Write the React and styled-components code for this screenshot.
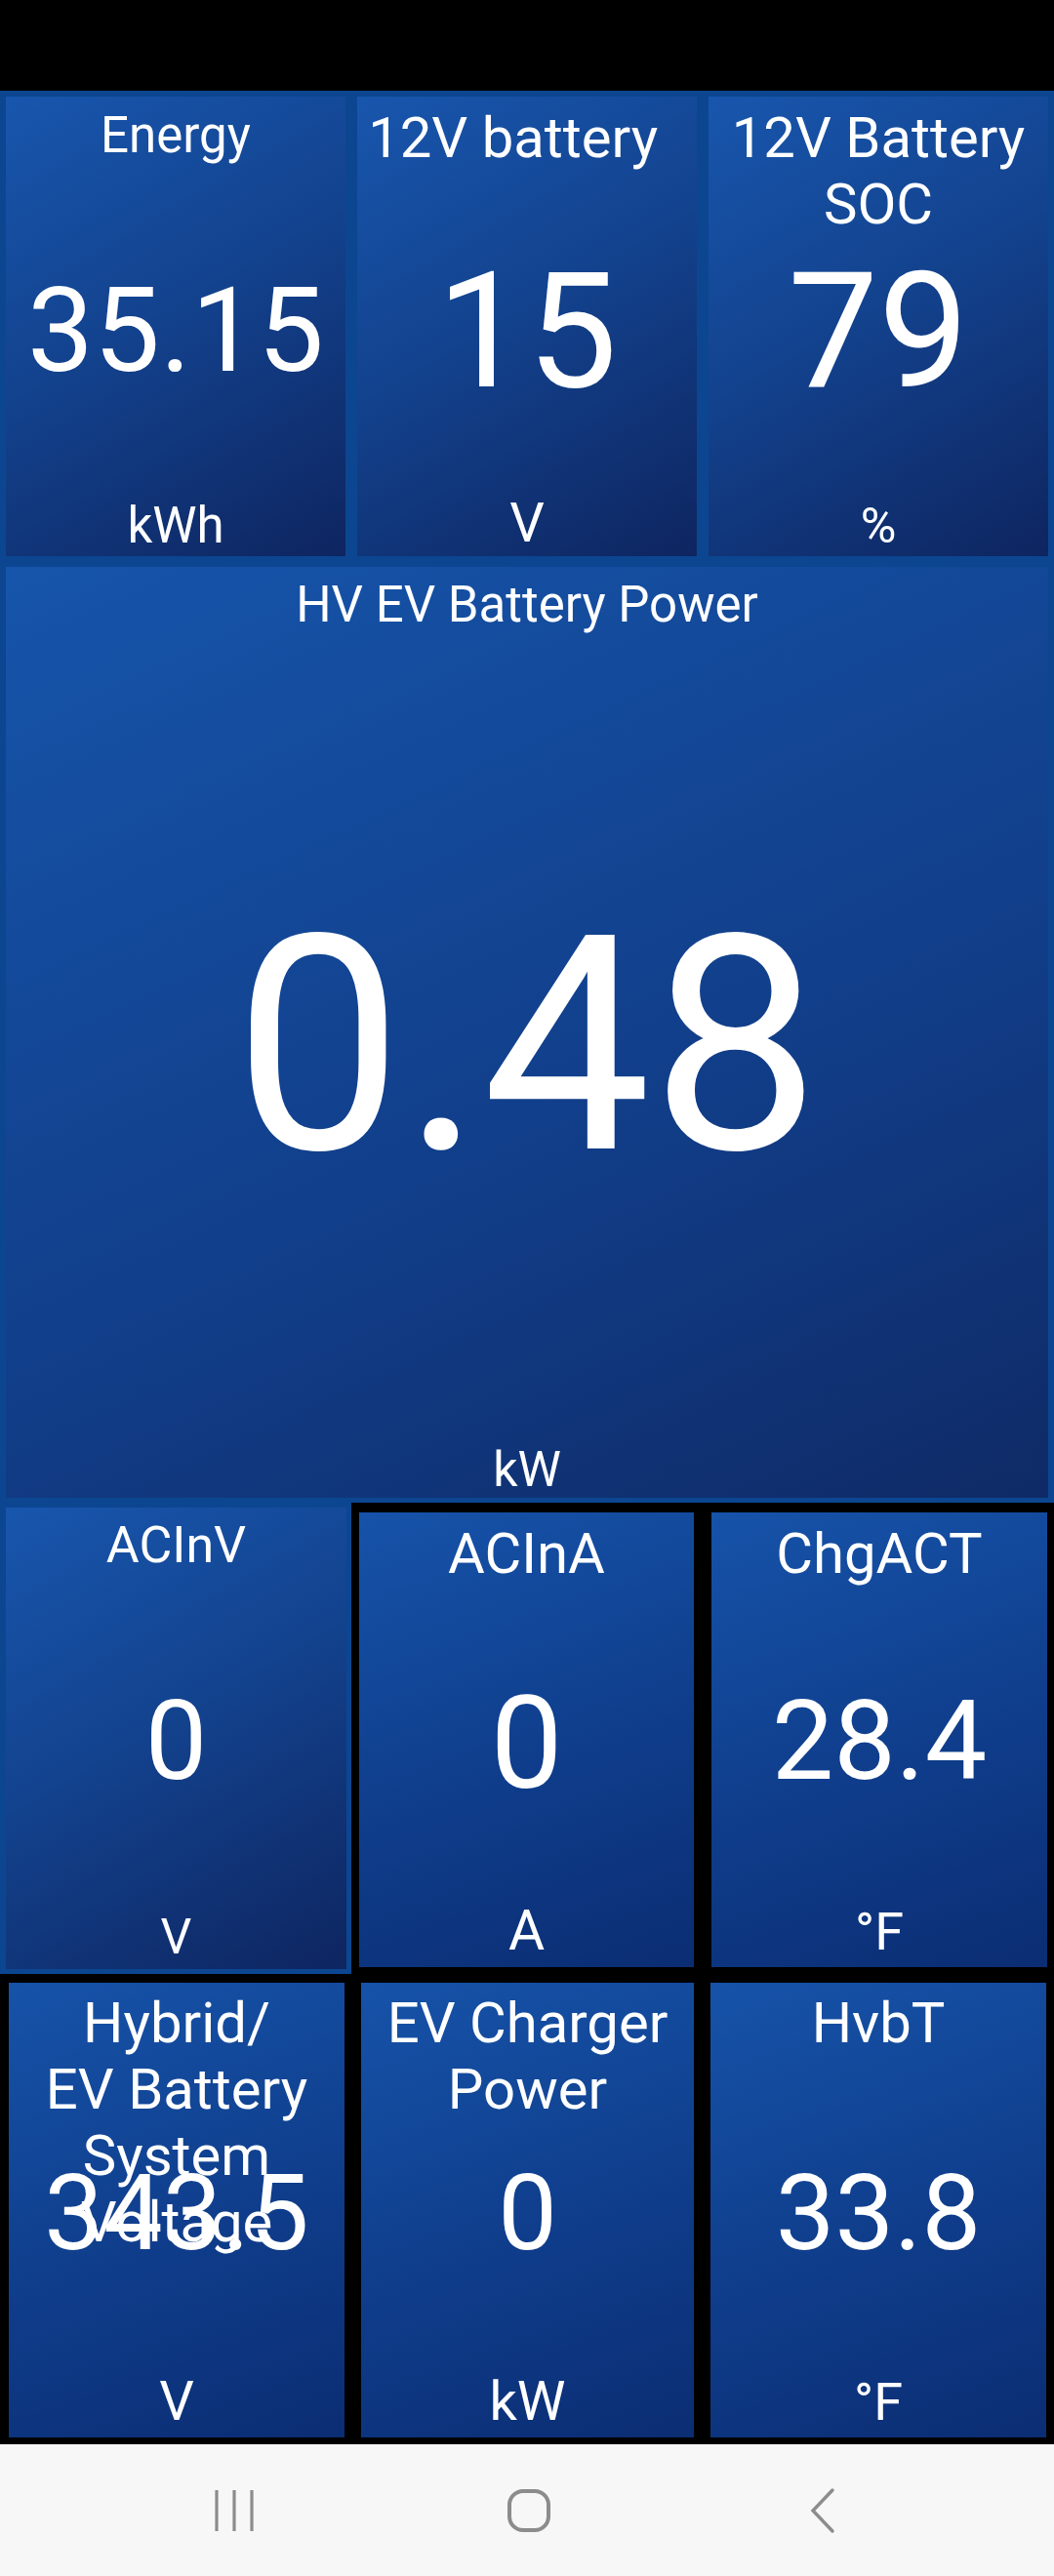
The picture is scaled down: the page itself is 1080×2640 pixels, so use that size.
import React from 'react';
import styled, { createGlobalStyle } from 'styled-components';

const GlobalStyle = createGlobalStyle`
  html, body {
    margin: 0;
    padding: 0;
    background: #000;
  }
  body {
    font-family: Roboto, "Noto Sans", "Liberation Sans", sans-serif;
  }
`;

const gradients = {
  dark: 'linear-gradient(150deg, #1856ad 0%, #13438f 45%, #0e2560 100%)',
  light: 'linear-gradient(160deg, #1653a9 0%, #0f3d8b 55%, #0b2d73 100%)',
  big: 'linear-gradient(155deg, #1655ab 0%, #113d88 60%, #0f2a66 100%)'
};

const Screen = styled.div`
  width: 1080px;
  height: 2640px;
  display: flex;
  flex-direction: column;
  background: #000;
  overflow: hidden;
`;

const StatusBar = styled.div`
  height: 93px;
  flex: none;
  background: #000;
`;

const SelectedFrame = styled.div`
  background: #0c4691;
  padding: 6px 6px 5px 6px;
  display: flex;
  flex-direction: column;
  gap: 11px;
`;

const TopRow = styled.div`
  display: grid;
  grid-template-columns: repeat(3, 348px);
  column-gap: 12px;
`;

const MidRow = styled.div`
  display: flex;
  align-items: flex-start;
`;

const CellFrame = styled.div`
  width: 360px;
  box-sizing: border-box;
  background: #0c4691;
  padding: 5px 5px 5px 6px;
`;

const BottomRow = styled.div`
  display: grid;
  grid-template-columns: 344px 341px 344px;
  column-gap: 17px;
  padding: 9px 7px 0 9px;
`;

const Tile = styled.div`
  display: grid;
  grid-template: 1fr / 1fr;
  box-sizing: border-box;
  height: ${p => p.$h}px;
  width: ${p => (p.$w ? `${p.$w}px` : 'auto')};
  margin-top: ${p => p.$mt || 0}px;
  margin-left: ${p => p.$ml || 0}px;
  background: ${p => gradients[p.$tone || 'light']};
  color: #fff;
  text-align: center;
  overflow: hidden;

  & > * {
    grid-area: 1 / 1;
  }
`;

const Title = styled.div`
  align-self: start;
  padding: ${p => p.$pt || 9}px 2px 0;
  font-size: ${p => p.$size}px;
  line-height: 1.17;
  font-weight: 400;
  white-space: pre-wrap;
`;

const Value = styled.div`
  align-self: center;
  margin-top: ${p => p.$offset || 0}px;
  font-size: ${p => p.$size}px;
  line-height: 1;
  font-weight: 400;
`;

const Unit = styled.div`
  align-self: end;
  padding-bottom: ${p => p.$pb || 7}px;
  font-size: ${p => p.$size}px;
  line-height: 1;
`;

const NavBar = styled.div`
  margin-top: auto;
  height: 135px;
  flex: none;
  background: #f7f7f7;
  display: flex;
  align-items: center;
  padding-left: 181px;
  gap: 181px;
`;

const NavButton = styled.div`
  width: 120px;
  height: 60px;
  display: flex;
  align-items: center;
  justify-content: center;
  color: #8c8c8c;
`;

const Gauge = ({ title, value, unit, tone, h, w, mt, ml, ts, vs, us, tp, vo, ub }) => (
  <Tile $tone={tone} $h={h} $w={w} $mt={mt} $ml={ml}>
    <Title $size={ts} $pt={tp}>{title}</Title>
    <Value $size={vs} $offset={vo}>{value}</Value>
    <Unit $size={us} $pb={ub}>{unit}</Unit>
  </Tile>
);

const RecentsIcon = () => (
  <svg width="44" height="46" viewBox="0 0 44 46" fill="none" stroke="currentColor" strokeWidth="3.2">
    <line x1="3" y1="2" x2="3" y2="44" />
    <line x1="21" y1="2" x2="21" y2="44" />
    <line x1="39" y1="2" x2="39" y2="44" />
  </svg>
);

const HomeIcon = () => (
  <svg width="46" height="46" viewBox="0 0 46 46" fill="none" stroke="currentColor" strokeWidth="4">
    <rect x="3" y="3" width="40" height="40" rx="14" />
  </svg>
);

const BackIcon = () => (
  <svg width="28" height="48" viewBox="0 0 28 48" fill="none" stroke="currentColor" strokeWidth="3.4" strokeLinecap="round">
    <polyline points="24,3 4,24 24,45" />
  </svg>
);

export default function App() {
  return (
    <>
      <GlobalStyle />
      <Screen>
        <StatusBar />
        <SelectedFrame>
          <TopRow>
            <Gauge tone="dark" h={471} title="Energy" value="35.15" unit="kWh" ts={51} vs={121} us={51} tp={10} vo={10} ub={6} />
            <Gauge tone="dark" h={471} title={'12V battery\u00a0\u00a0'} value="15" unit="V" ts={58} vs={165} us={56} tp={9} vo={10} ub={6} />
            <Gauge tone="dark" h={471} title="12V Battery SOC" value="79" unit="%" ts={58} vs={165} us={50} tp={9} vo={10} ub={6} />
          </TopRow>
          <Gauge tone="big" h={954} title="HV EV Battery Power" value="0.48" unit="kW" ts={51} vs={308} us={50} tp={9} vo={28} ub={4} />
        </SelectedFrame>
        <MidRow>
          <CellFrame>
            <Gauge tone="dark" h={473} title="ACInV" value="0" unit="V" ts={52} vs={113} us={50} tp={9} vo={5} ub={8} />
          </CellFrame>
          <Gauge h={466} w={343} mt={10} ml={8} title="ACInA" value="0" unit="A" ts={58} vs={132} us={57} tp={9} vo={8} ub={9} />
          <Gauge h={466} w={344} mt={10} ml={18} title="ChgACT" value="28.4" unit="°F" ts={58} vs={113} us={54} tp={9} vo={2} ub={9} />
        </MidRow>
        <BottomRow>
          <Gauge h={466} title={<>Hybrid/<br />EV Battery<br />System<br />Voltage</>} value="343.5" unit="V" ts={58} vs={108} us={56} tp={8} vo={5} ub={9} />
          <Gauge h={466} title="EV Charger Power" value="0" unit="kW" ts={58} vs={108} us={56} tp={8} vo={5} ub={9} />
          <Gauge h={466} title="HvbT" value="33.8" unit="°F" ts={58} vs={108} us={54} tp={8} vo={5} ub={9} />
        </BottomRow>
        <NavBar>
          <NavButton><RecentsIcon /></NavButton>
          <NavButton><HomeIcon /></NavButton>
          <NavButton><BackIcon /></NavButton>
        </NavBar>
      </Screen>
    </>
  );
}
